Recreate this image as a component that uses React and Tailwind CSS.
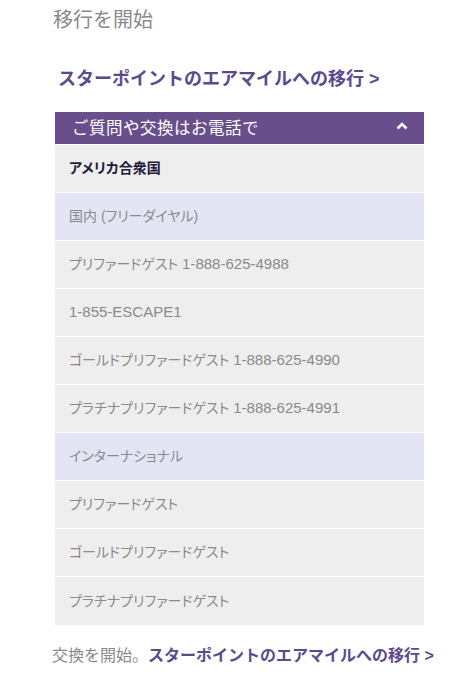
import React from "react";

const ROWS = [
  { label: "アメリカ合衆国", kind: "head" },
  { label: "国内 (フリーダイヤル)", kind: "group" },
  { label: "プリファードゲスト ", num: "1-888-625-4988" },
  { label: "", num: "1-855-ESCAPE1" },
  { label: "ゴールドプリファードゲスト ", num: "1-888-625-4990" },
  { label: "プラチナプリファードゲスト ", num: "1-888-625-4991" },
  { label: "インターナショナル", kind: "group" },
  { label: "プリファードゲスト" },
  { label: "ゴールドプリファードゲスト" },
  { label: "プラチナプリファードゲスト" },
];

const FONT = {
  fontFamily: '"Liberation Sans", Arial, "Noto Sans CJK JP", sans-serif',
};

export default function App() {
  return (
    <div className="min-h-[683px] bg-white" style={FONT}>
      <div className="px-[53px] pt-[8px]">
        <h2 className="text-[20px] leading-[24px] text-[#8a8a8a]">移行を開始</h2>

        <a
          href="#"
          className="mt-[35px] ml-[5px] block whitespace-nowrap text-[18px] font-bold leading-[24px] text-[#5c4a8c]"
        >
          スターポイントのエアマイルへの移行 &gt;
        </a>

        <div className="mt-[21px] ml-[2px] w-[369px]">
          <div className="flex h-[32px] items-center justify-between bg-[#684f8c] pl-[17px] pr-[16px] text-white">
            <span className="text-[16.5px] tracking-[0.5px]">ご質問や交換はお電話で</span>
            <svg width="12" height="8" viewBox="0 0 12 8" className="mb-[4px]">
              <path d="M1.5 6.5 L6 2 L10.5 6.5" fill="none" stroke="white" strokeWidth="2.6" />
            </svg>
          </div>
          <ul className="border-t border-white [font-feature-settings:'palt']">
            {ROWS.map((row, i) => (
              <li
                key={i}
                className={
                  "flex h-[48px] items-center whitespace-pre pl-[14px] text-[14px] " +
                  (i < ROWS.length - 1 ? "border-b border-white " : "") +
                  (row.kind === "group"
                    ? "bg-[#e3e5f5] text-[#8a8a8a]"
                    : row.kind === "head"
                    ? "bg-[#eeeeee] font-bold text-[#1e1b3a]"
                    : "bg-[#eeeeee] text-[#8a8a8a]")
                }
              >
                {row.label}
                {row.num && <span className="text-[15px]">{row.num}</span>}
              </li>
            ))}
          </ul>
        </div>

        <p className="mt-[20px] -ml-[1px] whitespace-nowrap text-[16px] leading-[22px] text-[#8a8a8a]">
          交換を開始。
          <a href="#" className="font-bold text-[#5c4a8c]">
            スターポイントのエアマイルへの移行 &gt;
          </a>
        </p>
      </div>
    </div>
  );
}
